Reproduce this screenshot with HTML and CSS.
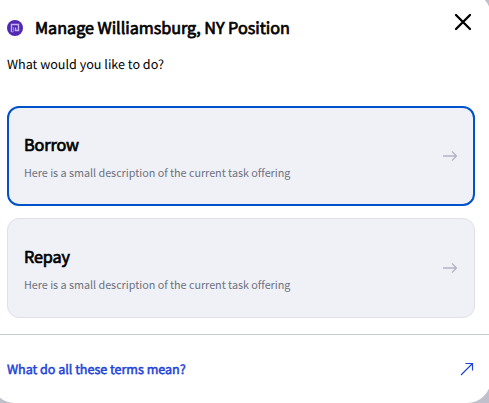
FILE: index.html
```html
<!DOCTYPE html>
<html lang="en">
<head>
<meta charset="utf-8">
<title>Manage Position</title>
<link rel="stylesheet" href="styles.css">
</head>
<body>
<main class="modal">
  <header class="header">
    <svg class="logo" width="16" height="16" viewBox="0 0 16 16" fill="none">
      <circle cx="8" cy="8" r="8" fill="#5028b4"/>
      <path d="M4.5 12V4.5H11.5V10.5H8.5V7.5" stroke="#c4b6ec" stroke-width="1.4"/>
      <path d="M4.5 12H6.5V7" stroke="#9c86da" stroke-width="0.8"/>
    </svg>
    <h1 class="title">Manage Williamsburg, NY Position</h1>
    <button class="close" aria-label="Close">
      <svg width="18" height="18" viewBox="0 0 18 18" fill="none" stroke="#000" stroke-width="2.3" stroke-linecap="round"><path d="M2 2L16 16M16 2L2 16"/></svg>
    </button>
  </header>
  <p class="prompt">What would you like to do?</p>
  <div class="options">
    <button class="card card-active">
      <span class="card-text"><span class="card-title">Borrow</span><span class="card-desc">Here is a small description of the current task offering</span></span>
      <svg class="arrow" width="16" height="12" viewBox="0 0 16 12" fill="none"><path d="M1 6H14" stroke="#bbbfca" stroke-width="1.8"/><path d="M10 1.5L14.5 6L10 10.5" stroke="#adb1bd" stroke-width="1.1"/></svg>
    </button>
    <button class="card">
      <span class="card-text"><span class="card-title">Repay</span><span class="card-desc">Here is a small description of the current task offering</span></span>
      <svg class="arrow" width="16" height="12" viewBox="0 0 16 12" fill="none"><path d="M1 6H14" stroke="#bbbfca" stroke-width="1.8"/><path d="M10 1.5L14.5 6L10 10.5" stroke="#adb1bd" stroke-width="1.1"/></svg>
    </button>
  </div>
  <footer class="footer">
    <a class="terms">What do all these terms mean?</a>
    <svg width="14" height="14" viewBox="0 0 14 14" fill="none" stroke="#1d43d8" stroke-width="1.2"><path d="M1 13L12.5 1.5M5.5 1.5H12.5V8.5"/></svg>
  </footer>
</main>
</body>
</html>
```

FILE: styles.css
```css
* { box-sizing: border-box; }
body {
  margin: 0;
  height: 403px;
  overflow: hidden;
  background: #c0c0cd;
  font-family: "Noto Sans CJK SC", "Noto Sans", sans-serif;
  color: #000;
  text-rendering: geometricPrecision;
}
button { font: inherit; color: inherit; }
.modal {
  width: 500px;
  height: 411px;
  margin: -8px 0 0 -9px;
  padding-top: 8px;
  background: #fff;
  border-radius: 24px;
}
.header {
  display: flex;
  align-items: center;
  height: 56px;
  padding: 0 19px 0 16px;
}
.title {
  margin: -2px 0 0 12px;
  font-size: 16.2px;
  font-weight: 400;
  line-height: 24px;
  letter-spacing: -0.03px;
  -webkit-text-stroke: 0.7px currentColor;
}
.close {
  display: flex;
  margin: 0 0 12px auto;
  padding: 0;
  border: 0;
  background: none;
}
.prompt {
  margin: 0;
  padding-left: 16px;
  font-size: 12.6px;
  line-height: 16px;
}
.options {
  display: flex;
  flex-direction: column;
  gap: 12px;
  padding: 34px 16px 16px 16px;
}
.card {
  display: flex;
  align-items: center;
  justify-content: space-between;
  height: 100px;
  padding: 0 16px;
  border: 1px solid #e0e1e8;
  border-radius: 12px;
  background: #f0f1f6;
  text-align: left;
}
.card-active {
  padding: 0 15px;
  border: 2px solid #0052cc;
}
.card-text { display: flex; flex-direction: column; gap: 8px; }
.card-title {
  font-size: 16.2px;
  line-height: 24px;
  letter-spacing: -0.1px;
  -webkit-text-stroke: 0.7px currentColor;
}
.card-desc {
  font-size: 10.8px;
  line-height: 16px;
  letter-spacing: -0.027px;
  color: #6d7180;
}
.footer {
  display: flex;
  align-items: center;
  justify-content: space-between;
  height: 68px;
  padding: 0 17px 0 16px;
  border-top: 1px solid #c9cbd4;
}
.terms {
  font-size: 12.6px;
  letter-spacing: -0.03px;
  color: #1d43d8;
  -webkit-text-stroke: 0.5px currentColor;
}
```
